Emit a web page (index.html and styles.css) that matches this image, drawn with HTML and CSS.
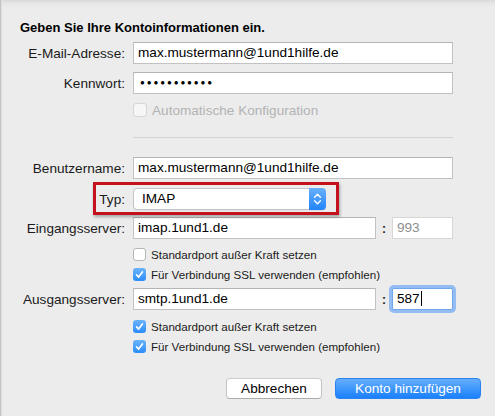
FILE: index.html
```html
<!DOCTYPE html>
<html lang="de">
<head>
<meta charset="utf-8">
<title>Konto hinzufügen</title>
<link rel="stylesheet" href="styles.css">
</head>
<body>
<div class="window">
  <h1 class="heading">Geben Sie Ihre Kontoinformationen ein.</h1>

  <div class="row mt-6">
    <span class="lbl">E-Mail-Adresse:</span>
    <div class="field w-full">max.mustermann@1und1hilfe.de</div>
  </div>

  <div class="row mt-8">
    <span class="lbl">Kennwort:</span>
    <div class="field w-full dots">●●●●●●●●●●●</div>
  </div>

  <div class="check-row big disabled mt-9">
    <span class="cb"></span>
    <span>Automatische Konfiguration</span>
  </div>

  <div class="sep"></div>

  <div class="row mt-19">
    <span class="lbl">Benutzername:</span>
    <div class="field w-full">max.mustermann@1und1hilfe.de</div>
  </div>

  <div class="row typ-row mt-9">
    <span class="lbl">Typ:</span>
    <div class="select">
      <span class="select-text">IMAP</span>
      <span class="stepper">
        <svg width="17" height="22" viewBox="0 0 17 22"><path d="M5.6 9.2 L8.5 6.3 L11.4 9.2 M5.6 12.8 L8.5 15.7 L11.4 12.8" fill="none" stroke="#fff" stroke-width="1.4" stroke-linecap="round" stroke-linejoin="round"/></svg>
      </span>
    </div>
    <div class="highlight"></div>
  </div>

  <div class="row mt-7">
    <span class="lbl">Eingangsserver:</span>
    <div class="field w-server">imap.1und1.de</div>
    <span class="colon">:</span>
    <div class="field port port-disabled">993</div>
  </div>

  <div class="check-row mt-9">
    <span class="cb"></span>
    <span>Standardport außer Kraft setzen</span>
  </div>
  <div class="check-row mt-7">
    <span class="cb on"><svg width="13" height="13" viewBox="0 0 13 13"><path d="M3.6 6.9 L5.6 9.1 L9.4 3.9" fill="none" stroke="#fff" stroke-width="1.7" stroke-linecap="round" stroke-linejoin="round"/></svg></span>
    <span>Für Verbindung SSL verwenden (empfohlen)</span>
  </div>

  <div class="row mt-7">
    <span class="lbl">Ausgangsserver:</span>
    <div class="field w-server">smtp.1und1.de</div>
    <span class="colon">:</span>
    <div class="field port focus">587<span class="caret"></span></div>
  </div>

  <div class="check-row mt-10">
    <span class="cb on"><svg width="13" height="13" viewBox="0 0 13 13"><path d="M3.6 6.9 L5.6 9.1 L9.4 3.9" fill="none" stroke="#fff" stroke-width="1.7" stroke-linecap="round" stroke-linejoin="round"/></svg></span>
    <span>Standardport außer Kraft setzen</span>
  </div>
  <div class="check-row mt-7">
    <span class="cb on"><svg width="13" height="13" viewBox="0 0 13 13"><path d="M3.6 6.9 L5.6 9.1 L9.4 3.9" fill="none" stroke="#fff" stroke-width="1.7" stroke-linecap="round" stroke-linejoin="round"/></svg></span>
    <span>Für Verbindung SSL verwenden (empfohlen)</span>
  </div>

  <div class="buttons">
    <button class="btn">Abbrechen</button>
    <button class="btn primary">Konto hinzufügen</button>
  </div>
</div>
</body>
</html>
```

FILE: styles.css
```css
* { box-sizing: border-box; }
html, body { margin: 0; padding: 0; }
body {
  background: #ececec;
  font-family: "Liberation Sans", Arial, Helvetica, sans-serif;
  color: #1a1a1a;
  font-size: 13.6px;
}
.window {
  height: 416px;
  padding-top: 20px;
  background: linear-gradient(#d9d9d9 0, #e6e6e6 3px, #ececec 8px);
  box-shadow: inset 1px 0 0 #c4c4c4, inset 2px 0 0 #dedede;
  overflow: hidden;
}
.heading {
  margin: 0 0 0 20px;
  font-size: 13px;
  font-weight: bold;
  line-height: 16px;
  color: #000;
}
.mt-6 { margin-top: 6px; }
.mt-7 { margin-top: 7px; }
.mt-8 { margin-top: 8px; }
.mt-9 { margin-top: 9px; }
.mt-10 { margin-top: 10px; }
.mt-19 { margin-top: 19px; }

.row {
  display: flex;
  align-items: center;
  height: 22px;
}
.lbl {
  flex: none;
  width: 125px;
  margin-right: 8px;
  text-align: right;
  font-size: 13.6px;
  color: #1a1a1a;
  white-space: nowrap;
}
.field {
  flex: none;
  height: 22px;
  background: #fff;
  border: 1px solid #c2c2c2;
  border-top-color: #b4b4b4;
  padding: 0 4px;
  line-height: 20px;
  font-size: 13.6px;
  color: #000;
  white-space: nowrap;
  overflow: hidden;
}
.w-full { width: 320px; }
.w-server { width: 243px; }
.dots {
  font-size: 8px;
  letter-spacing: 1.9px;
  padding-left: 6px;
}
.colon {
  flex: none;
  width: 16px;
  text-align: center;
  font-size: 13.6px;
  font-weight: bold;
  color: #333;
}
.port { width: 61px; }
.port-disabled {
  color: #8f8f8f;
  border-color: #d6d6d6;
}
.port.focus {
  border-color: #72a6ea;
  border-radius: 2px;
  box-shadow: 0 0 0 3px #93bdf2;
}
.caret {
  display: inline-block;
  width: 1px;
  height: 15px;
  background: #000;
  vertical-align: -3px;
  margin-left: 1px;
}

.check-row {
  display: flex;
  align-items: center;
  gap: 5px;
  height: 13px;
  margin-left: 133px;
  font-size: 11.6px;
  color: #1a1a1a;
  white-space: nowrap;
}
.check-row.big {
  font-size: 13.6px;
  height: 14px;
}
.check-row.disabled { color: #b3b3b3; }
.cb {
  flex: none;
  width: 13px;
  height: 13px;
  border-radius: 3px;
  background: #fff;
  border: 1px solid #b5b5b5;
  display: flex;
  align-items: center;
  justify-content: center;
}
.check-row.big .cb { width: 14px; height: 14px; }
.check-row.disabled .cb { border-color: #d6d6d6; background: #f6f6f6; }
.cb svg { display: block; }
.cb.on {
  border: none;
  background: linear-gradient(#6cb4fb, #2b8cfb);
}

.sep {
  margin: 20px 0 0 133px;
  width: 320px;
  height: 1px;
  background: #d5d5d5;
}

.typ-row { position: relative; }
.select {
  flex: none;
  width: 193px;
  height: 22px;
  display: flex;
  align-items: stretch;
  background: #fff;
  border: 1px solid #c4c4c4;
  border-radius: 4px;
  box-shadow: 0 1px 0 rgba(0,0,0,0.05);
}
.select-text {
  flex: 1;
  padding-left: 8px;
  line-height: 20px;
  font-size: 13.6px;
  color: #000;
}
.stepper {
  flex: none;
  width: 17px;
  margin: -1px -1px -1px 0;
  border-radius: 0 4px 4px 0;
  background: linear-gradient(#68b0fb, #2284fa);
}
.stepper svg { display: block; }
.highlight {
  position: absolute;
  left: 93px;
  top: -6px;
  width: 246px;
  height: 33px;
  border: 3px solid #c3121b;
  box-shadow: 1px 2px 3px rgba(0,0,0,0.3);
  pointer-events: none;
}

.buttons {
  display: flex;
  gap: 13px;
  margin: 25px 0 0 226px;
}
.btn {
  height: 21px;
  border-radius: 4px;
  font-family: "Liberation Sans", Arial, Helvetica, sans-serif;
  font-size: 13.6px;
  padding: 0;
  line-height: 19px;
  color: #000;
  background: #fff;
  border: 1px solid #c2c2c2;
  border-top-color: #cdcdcd;
  border-bottom-color: #acacac;
  width: 96px;
}
.btn.primary {
  width: 146px;
  color: #fff;
  border: 1px solid #2a83f0;
  background: linear-gradient(#66aefc, #1a80fb);
}
```
